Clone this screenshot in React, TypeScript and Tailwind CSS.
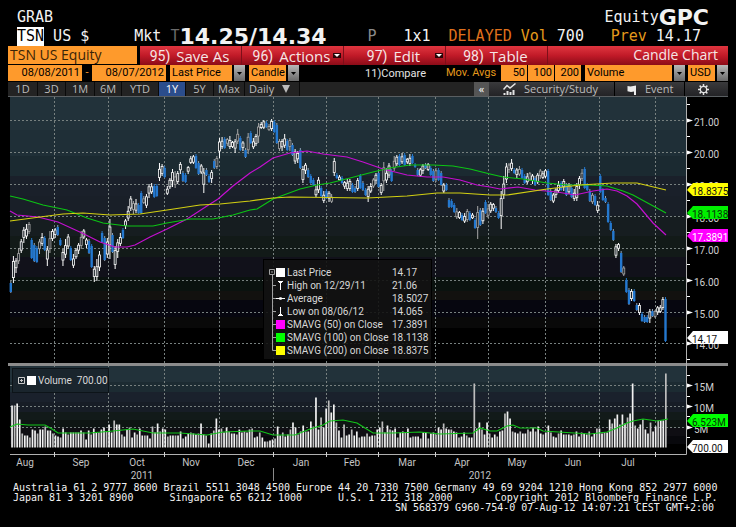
import { Fragment } from "react";
import type { ReactNode } from "react";

const MONO = "font-['DejaVu_Sans_Mono',monospace]";
const SMALL = "font-[Roboto,'Liberation_Sans',sans-serif]";
const UI = "font-['Open_Sans','Noto_Sans',sans-serif]";

// high-low per trading day, w = closed up, b = closed down
const DAYS = `281-293b 256-283w 258-273w 248-264w 239-253w 227-243w 224-239w 222-234w 238-259b 243-262b 246-263b 239-254w
233-246w 236-251b 246-266w 231-253w 229-241w 228-238w 225-236b 238-246b 249-266w 239-258w 234-249w 246-261b 254-268w 248-259w
243-254w 231-249w 229-239w 238-248w 239-254b 244-268b 266-282w 259-281w 251-271w 231-243b 236-261b 238-258w 219-259w 233-253b
246-269w 239-258w 233-246w 228-239b 219-229w 206-221w 196-211w 201-214w 199-213w 203-214b 191-214b 196-204w 194-208w 184-198w
183-194w 184-198b 184-197b 163-181w 164-176w 166-178b 186-195w 178-189w 169-187w 171-188w 171-184w 162-174w 171-182b 173-183b
166-174w 156-164w 155-164w 154-169b 161-175b 164-174w 168-193w 168-176b 174-183b 170-183w 159-169b 156-169w 138-158w 137-149w
137-149b 138-146w 136-149w 141-148w 139-153w 129-144w 136-151b 141-151w 148-158b 133-154w
131-144b 138-149w 134-146w 123-143w 122-129w 120-129w 121-128b 124-131w 119-131w 120-133b 123-144b 139-151w 139-151w 134-148w
139-151b 138-151w 143-156b 149-164w 151-163w 148-169b 166-183w 163-174w 168-178b 174-184b 178-186b 186-197w 177-193w 186-197b
191-203w 189-199b 191-202w 194-203w 158-176w 173-179b 175-181w 176-184b 181-189w 179-191w 179-191w 183-193b 186-193b 178-191w
174-189b 181-191b 188-196b 186-202w 183-193w 178-188w 173-184w 171-188b 183-195w 162-191w 168-183w 163-178w 169-182b 156-171w
155-166w 154-166b 153-164w 153-166b 158-164w 154-166w 154-164b 163-168b 168-176b 168-177w 164-174w 163-169b 163-171w 166-176b
169-182b 168-182w 168-181b 171-186b 183-193w 183-191b 198-208b 199-208b 203-213b 208-219w 211-219w 213-221b 213-223w 209-222w
211-221b 213-219w 218-229b 206-239w 208-226b 208-224w 200-214b 204-218w
202-213w 203-211w 206-213b 211-219b 191-229w 176-199w 163-183w 163-173w 159-171w 168-174b 168-178w 166-176w 168-179b 174-184b
173-184w 172-181w 174-184w 176-186b 173-184w 169-179w 171-179w 169-178w 169-196b 189-201b 193-203w 188-198w 181-193w 181-191b
179-191w 183-196b 183-194w 186-198b 189-201w 183-201w 176-189w 169-181w 167-189b 183-191b 189-202b 193-204w 194-206b 201-213w
174-193b 188-201b 196-203b 202-223b 221-231b 229-241b 244-258w 243-251w 251-273b 266-276w 278-293b 288-305b 289-301w 289-302b
303-311b 303-315w 312-322b 315-323b 315-323b 309-323w 309-317b 310-318w 306-315w 305-313w 297-310w 297-342b`
  .split(/\s+/)
  .map((d) => ({
    high: Number(d.slice(0, 3)),
    low: Number(d.slice(4, 7)),
    up: d[7] === "w",
  }));

const VOLUMES = [
  42, 42, 44, 28, 14, 12, 12, 10, 18, 17, 14, 18, 18, 21, 17, 17, 14, 12, 11, 10, 19, 15, 13, 15, 15, 15, 15, 17, 15, 8, 17, 13,
  19, 15, 15, 18, 20, 16, 23, 15, 27, 23, 23, 13, 11, 18, 20, 10, 15, 13, 19, 12, 12, 12, 9, 21, 15, 24, 16, 19, 18, 11, 12, 12,
  12, 12, 16, 9, 11, 14, 15, 14, 13, 14, 24, 13, 12, 4, 14, 17, 29, 18, 19, 15, 20, 16, 14, 14, 13, 18, 15, 16, 15, 18, 19, 10,
  11, 15, 10, 6, 6, 7, 8, 9, 21, 12, 15, 11, 13, 18, 25, 20, 13, 16, 22, 16, 16, 26, 21, 50, 18, 30, 20, 39, 47, 35, 43, 25, 17,
  10, 23, 12, 13, 18, 12, 16, 10, 11, 11, 14, 11, 12, 12, 18, 20, 26, 15, 22, 18, 17, 19, 10, 15, 16, 15, 19, 10, 11, 11, 11, 9,
  15, 15, 9, 14, 15, 13, 20, 18, 24, 19, 18, 18, 16, 15, 10, 11, 15, 12, 10, 10, 64, 19, 25, 18, 13, 25, 14, 10, 13, 11, 16, 17,
  34, 36, 29, 16, 15, 14, 16, 14, 14, 18, 16, 20, 16, 21, 14, 13, 15, 22, 15, 11, 10, 14, 17, 13, 13, 13, 12, 13, 16, 11, 15, 14,
  13, 16, 11, 14, 19, 19, 14, 15, 15, 28, 24, 29, 33, 23, 33, 24, 30, 34, 64, 22, 19, 23, 28, 18, 14, 25, 16, 21, 27, 27, 27, 74,
];

const SMA50 =
  "10,211 17,215 38,217 58,222 82,233 100,242 115,247 127,247 135,245 150,237 167,229 187,219 207,206 218,199 233,186 250,173 260,167 273,158 290,153 307,151 323,154 347,157 363,162 383,169 407,175 427,177 443,177 460,180 477,185 490,187 500,189 518,187 535,190 557,192 575,195 593,191 607,189 617,191 627,196 637,204 653,223 666,235";
const SMA100 =
  "10,196 23,199 43,205 67,210 87,218 103,223 127,226 153,226 167,223 190,219 213,219 233,215 250,210 257,209 273,199 300,189 317,185 330,183 350,178 373,172 390,168 410,165 433,165 453,166 470,169 490,174 503,177 523,179 547,183 567,185 590,185 607,186 623,191 633,195 666,213";
const SMA200 =
  "10,221 40,217 63,214 83,213 110,215 140,214 167,210 200,205 220,204 250,201 273,198 290,197 367,198 407,196 437,193 460,193 490,195 507,195 547,189 580,185 613,183 637,183 666,190";
const VOLUME_AVG =
  "10,427 17,424 28,425 45,425 52,429 58,433 90,433 113,431 133,429 153,433 180,433 207,435 223,432 250,431 260,431 273,435 295,435 310,429 323,425 330,421 343,420 357,423 373,433 393,433 420,432 440,434 473,433 480,428 490,431 497,431 507,426 513,425 520,428 537,428 543,431 590,434 607,432 617,428 627,423 633,421 643,419 657,421 668,419";

const MONTH_LINES = [54.5, 108.5, 164.5, 219.5, 273.5, 326.5, 378.5, 435.5, 488.5, 545.5, 599.5, 655.5];
const MONTHS: [string, number][] = [
  ["Aug", 25], ["Sep", 81], ["Oct", 137], ["Nov", 191], ["Dec", 246], ["Jan", 301],
  ["Feb", 352], ["Mar", 407], ["Apr", 462], ["May", 517], ["Jun", 573], ["Jul", 628],
];
const PRICES: [string, number][] = [
  ["21.00", 120.5], ["20.00", 152.5], ["19.00", 184.5], ["18.00", 216.5],
  ["17.00", 248.5], ["16.00", 280.5], ["15.00", 312.5], ["14.00", 343.5],
];
const VOLUME_TICKS: [string, number][] = [["15M", 385.5], ["10M", 406.5], ["5M", 427.5]];

// [y, height, colour]
const PRICE_BANDS: [number, number, string][] = [
  [96, 34, "#22323a"], [130, 26, "#1f2f37"], [156, 20, "#1b2a31"], [176, 20, "#1a202a"], [196, 20, "#191f28"],
  [216, 20, "#161d20"], [236, 21, "#121a18"], [257, 20, "#11111a"], [277, 14, "#0a120f"], [291, 9, "#12110f"],
  [300, 17, "#06060f"], [317, 11, "#090909"], [328, 35, "#000000"],
];
const VOLUME_BANDS: [number, number, string][] = [
  [366, 16, "#22323a"], [382, 10, "#1c2b32"], [392, 10, "#1a212c"], [402, 10, "#171d26"], [412, 8, "#121a19"],
  [420, 8, "#0e1513"], [428, 8, "#0f0e13"], [436, 8, "#08080c"], [444, 10, "#000000"],
];

const Tag = ({ y, fill, ink, label }: { y: number; fill: string; ink: string; label: string }) => (
  <g>
    <path d={`M687 ${y} L693 ${y - 7} H728 V${y + 6} H693 Z`} fill={fill} />
    <text x={692} y={y + 5} fill={ink}>{label}</text>
  </g>
);

const Chart = () => (
  <svg viewBox="8 96 720 386" className="block w-full h-auto text-[10px]" role="img" aria-label="Candle Chart">
    {[...PRICE_BANDS, ...VOLUME_BANDS].map(([y, h, fill]) => (
      <rect key={y} x={10} y={y} width={677} height={h} fill={fill} />
    ))}
    <path d="M8 96.5H728" stroke="#5a5f62" />
    <g stroke="#77807f" strokeDasharray="2 2">
      {[...PRICES, ...VOLUME_TICKS].map(([label, y]) => (
        <path key={label} d={`M10 ${y}H686`} />
      ))}
      {MONTH_LINES.map((x) => (
        <path key={x} d={`M${x} 97V448`} />
      ))}
    </g>

    {DAYS.map(({ high, low, up }, i) => {
      const x = 10.8 + i * ((665.5 - 10.8) / (DAYS.length - 1));
      const size = low - high;
      const top = high + size * (i % 3 === 0 ? 0.35 : 0.2);
      const body = size * (i % 3 === 1 ? 0.6 : 0.45);
      return up ? (
        <g key={i} stroke={i % 4 === 3 ? "#a8a8a8" : "#ffffff"}>
          <path d={`M${x} ${high}V${low}`} />
          <rect x={x - 1} y={top} width={2} height={body} fill="#1b2228" strokeWidth={0.8} />
        </g>
      ) : (
        <g key={i} fill="#2478cf">
          <path d={`M${x} ${high}V${low}`} stroke={i % 3 === 0 ? "#8fa3b8" : "#2478cf"} />
          <rect x={x - 1.2} y={high + 2} width={2.4} height={size - 3} />
        </g>
      );
    })}
    <g fill="none" strokeWidth={1.2}>
      <polyline points={SMA50} stroke="#c40fd0" />
      <polyline points={SMA100} stroke="#0cc414" />
      <polyline points={SMA200} stroke="#d2cf12" />
    </g>

    <rect x={8} y={363} width={720} height={3} fill="#8c8c8c" />
    {VOLUMES.map((h, i) => (
      <rect
        key={i}
        x={11.2 + i * ((665 - 11.2) / (VOLUMES.length - 1))}
        y={447.5 - h}
        width={1.7}
        height={h}
        fill={i % 3 === 1 ? "#bdbdbd" : "#f2f2f2"}
      />
    ))}
    <polyline points={VOLUME_AVG} fill="none" stroke="#12c41a" strokeWidth={1.2} />

    <path d="M10 454.5H686.5V97" fill="none" stroke="#b0b0b0" />
    {MONTH_LINES.map((x) => (
      <path key={x} d={`M${x} 452V457`} stroke="#d0d0d0" />
    ))}
    <path d="M273.5 468V481" stroke="#8a8a8a" />
    <path
      d="M687 104.5h3M687 136.5h3M687 168.5h3M687 200.5h3M687 232.5h3M687 264.5h3M687 296.5h3M687 327.5h3M687 359.5h3M687 375.5h3M687 396.5h3M687 416.5h3M687 437.5h3"
      stroke="#ffffff"
    />
    {[...PRICES, ...VOLUME_TICKS].map(([label, y]) => (
      <g key={label}>
        <path d={`M687 ${y - 2}L693 ${y}L687 ${y + 2}Z`} fill="#ffffff" />
        <text x={694} y={y + 5} fill="#cfcfcf">{label}</text>
      </g>
    ))}
    <Tag y={190} fill="#ffff00" ink="#111111" label="18.8375" />
    <Tag y={213} fill="#00f000" ink="#063306" label="18.1138" />
    <Tag y={236} fill="#ff00ff" ink="#ffffff" label="17.3891" />
    <Tag y={338} fill="#ffffff" ink="#111111" label="14.17" />
    <Tag y={421} fill="#00ff00" ink="#063306" label="6.523M" />
    <Tag y={447} fill="#ffffff" ink="#111111" label="700.00" />
    <g fill="#c4c4c4" textAnchor="middle">
      {MONTHS.map(([label, x]) => (
        <text key={label} x={x} y={466}>{label}</text>
      ))}
      <text x={142} y={479}>2011</text>
      <text x={480} y={479}>2012</text>
    </g>
  </svg>
);

const Swatch = ({ fill }: { fill: string }) => (
  <svg viewBox="0 0 9 9" className="size-[9px] shrink-0" aria-hidden="true">
    <rect width={9} height={9} fill={fill} />
  </svg>
);

const Mark = ({ d }: { d: string }) => (
  <svg viewBox="0 0 9 9" className="size-[9px] shrink-0" fill="none" stroke="#ffffff" aria-hidden="true">
    <path d={d} />
  </svg>
);

const LEGEND: { icon: ReactNode; label: string; value: string }[] = [
  { icon: <Swatch fill="#ffffff" />, label: "Last Price", value: "14.17" },
  { icon: <Mark d="M2 .5H7M3 1.5H6M4.5 1V9" />, label: "High on 12/29/11", value: "21.06" },
  { icon: <Mark d="M0 4.5H9M3 4.5L4.5 3L6 4.5L4.5 6Z" />, label: "Average", value: "18.5027" },
  { icon: <Mark d="M2 8.5H7M3 7.5H6M4.5 0V8" />, label: "Low on 08/06/12", value: "14.065" },
  { icon: <Swatch fill="#ff00ff" />, label: "SMAVG (50) on Close", value: "17.3891" },
  { icon: <Swatch fill="#00ff00" />, label: "SMAVG (100) on Close", value: "18.1138" },
  { icon: <Swatch fill="#ffff00" />, label: "SMAVG (200) on Close", value: "18.8375" },
];

const Legend = () => (
  <div className="absolute left-[255px] top-[163px] flex w-[169px] border border-black bg-[#121212]/90 pt-[6px] pb-[2px] pl-1 text-[10px] leading-[13px] text-[#d8d8d8]">
    <svg viewBox="0 0 8 91" className="w-2 h-[91px] shrink-0" fill="none" stroke="#a0a0a0" aria-hidden="true">
      <path d="M1.5 3.5h5v5h-5zM3 6h2M4.5 9V84.5H8M4.5 19.5H8M4.5 32.5H8M4.5 45.5H8M4.5 58.5H8M4.5 71.5H8" />
    </svg>
    <dl className="grid grid-cols-[11px_105px_auto] items-center">
      {LEGEND.map(({ icon, label, value }) => (
        <Fragment key={label}>
          <span>{icon}</span>
          <dt className="whitespace-nowrap">{label}</dt>
          <dd>{value}</dd>
        </Fragment>
      ))}
    </dl>
  </div>
);

const Dropdown = ({ label, value, className }: { label: string; value: string; className: string }) => (
  <label className={`relative flex h-4 ${className}`}>
    <select aria-label={label} className="w-full appearance-none bg-[#fe9a2c] pl-0.5 leading-4 text-black border-r-[13px] border-black">
      <option>{value}</option>
    </select>
    <span className="pointer-events-none absolute right-0 top-0 flex h-4 w-[11px] items-center justify-center bg-linear-to-b from-[#b8b8b8] to-[#6a6a6a]">
      <svg viewBox="0 0 5 3" className="w-[5px] h-[3px]" aria-hidden="true">
        <path d="M0 0H5L2.5 3Z" fill="#000000" />
      </svg>
    </span>
  </label>
);

const MENU = [
  { num: "95", label: "Save As", arrow: false },
  { num: "96", label: "Actions", arrow: true },
  { num: "97", label: "Edit", arrow: true },
  { num: "98", label: "Table", arrow: false },
];

const RANGES = [
  { label: "1D", width: "w-[30px]" },
  { label: "3D", width: "w-[28px]" },
  { label: "1M", width: "w-[29px]" },
  { label: "6M", width: "w-[27px]" },
  { label: "YTD", width: "w-[37px]" },
  { label: "1Y", width: "w-[27px]" },
  { label: "5Y", width: "w-[28px]" },
  { label: "Max", width: "w-[31px]" },
];

const Header = () => (
  <header className={`px-[9px] text-[15px] leading-[19px] text-[#f2f2f2] whitespace-pre ${MONO}`}>
    <div className="flex justify-between pr-[10px]">
      <span>GRAB</span>
      <span className="flex">
        Equity<b className="text-[22px] font-['DejaVu_Sans',sans-serif]">GPC</b>
      </span>
    </div>
    <div className="flex pr-[18px]">
      <span><mark className="inline-block bg-white text-black">TSN</mark> US $</span>
      <span className="ml-[45px]">Mkt <span className="text-[#6b6b6b]">T</span></span>
      <b className="w-[188px] text-[22px] font-['DejaVu_Sans',sans-serif]">14.25/14.34</b>
      <span className="text-[#8a8a8a]">P</span>
      <span className="ml-[27px]">1x1</span>
      <span className="ml-[18px] text-[#e0711c]">DELAYED</span>
      <span className="ml-[9px] text-[#e59a1c]">Vol</span>
      <span className="ml-[9px]">700</span>
      <span className="ml-auto text-[#e59a1c]">Prev</span>
      <span className="ml-[9px]">14.17</span>
    </div>
  </header>
);

const MenuBar = () => (
  <nav className={`flex h-[19px] text-[14px] leading-[18px] ${UI}`}>
    <input
      aria-label="Security"
      defaultValue="TSN US Equity"
      className="h-[18px] w-[129px] bg-[#fe9a2c] pl-0.5 text-[#3a2408]"
    />
    <div className="ml-[3px] flex flex-1 items-stretch bg-linear-to-b from-[#e0353f] via-[#c11a28] to-[#8c0c18] text-[#f6e6e6]">
      {MENU.map(({ num, label, arrow }) => (
        <button key={num} className="flex w-[102px] items-center border-r border-[#7d0f19] pl-2 text-[15px]">
          <span className="flex flex-1 items-center justify-center gap-1.5 whitespace-nowrap">
            <span className="font-[Roboto,sans-serif] text-[14px]">{num})</span>
            {label}
          </span>
          <span className="w-[10px]">
            {arrow && (
              <svg viewBox="0 0 8 5" className="w-2 h-[5px]" aria-hidden="true">
                <rect width={8} height={5} fill="#2a0508" />
                <path d="M1 1H7L4 4Z" fill="#ffffff" />
              </svg>
            )}
          </span>
        </button>
      ))}
      <h1 className="ml-auto pr-[10px]">Candle Chart</h1>
    </div>
  </nav>
);

const FilterBar = () => (
  <div className={`flex h-[17px] text-[11px] leading-4 text-black ${SMALL}`}>
    <input aria-label="From" defaultValue="08/08/2011" className="h-4 w-[74px] bg-[#fe9a2c] pr-0.5 text-right" />
    <span className="w-[10px] text-center text-[#fe9a2c]">-</span>
    <input aria-label="To" defaultValue="08/07/2012" className="h-4 w-[74px] bg-[#fe9a2c] pr-0.5 text-right" />
    <Dropdown label="Price" value="Last Price" className="ml-1 w-[75px]" />
    <Dropdown label="Style" value="Candle" className="ml-1 w-[50px]" />
    <button className="ml-auto text-[#e4e4e4]">11)Compare</button>
    <span className="ml-[20px] w-[55px] text-[#e59a1c]">Mov. Avgs</span>
    <div className="flex gap-px">
      {["50", "100", "200"].map((days) => (
        <input
          key={days}
          aria-label={`Moving average ${days}`}
          defaultValue={days}
          className="h-4 w-[26px] bg-[#fe9a2c] pr-0.5 text-right"
        />
      ))}
    </div>
    <Dropdown label="Lower chart" value="Volume" className="ml-1 w-[100px]" />
    <Dropdown label="Currency" value="USD" className="ml-[3px] w-[40px]" />
  </div>
);

const RangeBar = () => (
  <div className={`flex h-[14px] bg-[#232323] text-[11px] leading-[14px] text-[#bcbcbc] ${UI}`}>
    {RANGES.map(({ label, width }) => (
      <button
        key={label}
        className={`${width} border-r border-[#0a0a0a] ${label === "1Y" ? "bg-[#2b4d8c] text-white" : ""}`}
      >
        {label}
      </button>
    ))}
    <button className="flex w-[55px] items-center gap-2 border-r border-[#0a0a0a] pl-1">
      Daily
      <svg viewBox="0 0 8 8" className="size-2" aria-hidden="true">
        <path d="M0 0H8L4 8Z" fill="#bcbcbc" />
      </svg>
    </button>
    <button aria-label="Collapse" className="ml-auto w-[15px] bg-[#555555] text-white">«</button>
    <div className="flex bg-linear-to-b from-[#3a3a3c] to-[#232326]">
      <button className="flex w-[126px] items-center gap-2 border-r border-black pl-[14px]">
        <svg viewBox="0 0 13 12" className="w-[13px] h-3" fill="none" stroke="#e4e4e4" aria-hidden="true">
          <path d="M0.5 6.5L4 2.5L7 5L12.5 0.5" strokeWidth={1.5} />
          <path d="M1.5 12V10M4.5 12V8M7.5 12V9M10.5 12V7" strokeWidth={2} />
        </svg>
        Security/Study
      </button>
      <button className="flex w-[70px] items-center gap-2 border-r border-black pl-3">
        <svg viewBox="0 0 10 11" className="w-[10px] h-[11px]" aria-hidden="true">
          <path d="M0.5 2L3.5 2.6L9 1.5V11H7V7.6L4 8L0.5 7.2Z" fill="#ececec" />
        </svg>
        Event
      </button>
      <button aria-label="Settings" className="flex w-[43px] items-center pl-[13px]">
        <svg viewBox="0 0 11 11" className="size-[11px]" fill="none" stroke="#e4e4e4" aria-hidden="true">
          <circle cx={5.5} cy={5.5} r={3.2} strokeWidth={1.3} />
          <path d="M5.5 0V2M5.5 9V11M0 5.5H2M9 5.5H11M1.6 1.6L3 3M8 8L9.4 9.4M9.4 1.6L8 3M3 8L1.6 9.4" strokeWidth={1.5} />
        </svg>
      </button>
    </div>
  </div>
);

const Footer = () => (
  <footer className={`px-[5px] pt-px text-[10px] leading-[10px] text-[#f2f2f2] whitespace-pre ${MONO}`}>
    <p>Australia 61 2 9777 8600 Brazil 5511 3048 4500 Europe 44 20 7330 7500 Germany 49 69 9204 1210 Hong Kong 852 2977 6000</p>
    <p>{"Japan 81 3 3201 8900      Singapore 65 6212 1000      U.S. 1 212 318 2000       Copyright 2012 Bloomberg Finance L.P."}</p>
    <p className="pr-[9px] text-right">SN 568379 G960-754-0 07-Aug-12 14:07:21 CEST GMT+2:00</p>
  </footer>
);

const App = () => {
  return (
    <main className="min-h-screen bg-black px-2 pt-2">
      <Header />
      <MenuBar />
      <FilterBar />
      <RangeBar />
      <div className={`relative ${SMALL}`}>
        <Chart />
        <Legend />
        <div className="absolute left-1 top-[272px] flex h-[25px] w-[97px] items-center gap-[2px] border border-[#0d1419] bg-[#1a252d] pl-[5px] text-[10px] whitespace-nowrap text-[#d8d8d8]">
          <svg viewBox="0 0 7 7" className="size-[7px] shrink-0" fill="none" stroke="#c8c8c8" aria-hidden="true">
            <path d="M.5 .5H6.5V6.5H.5ZM2 3.5H5M3.5 2V5" />
          </svg>
          <Swatch fill="#ffffff" />
          <span>Volume&nbsp; 700.00</span>
        </div>
      </div>
      <Footer />
    </main>
  );
};

export default App;
